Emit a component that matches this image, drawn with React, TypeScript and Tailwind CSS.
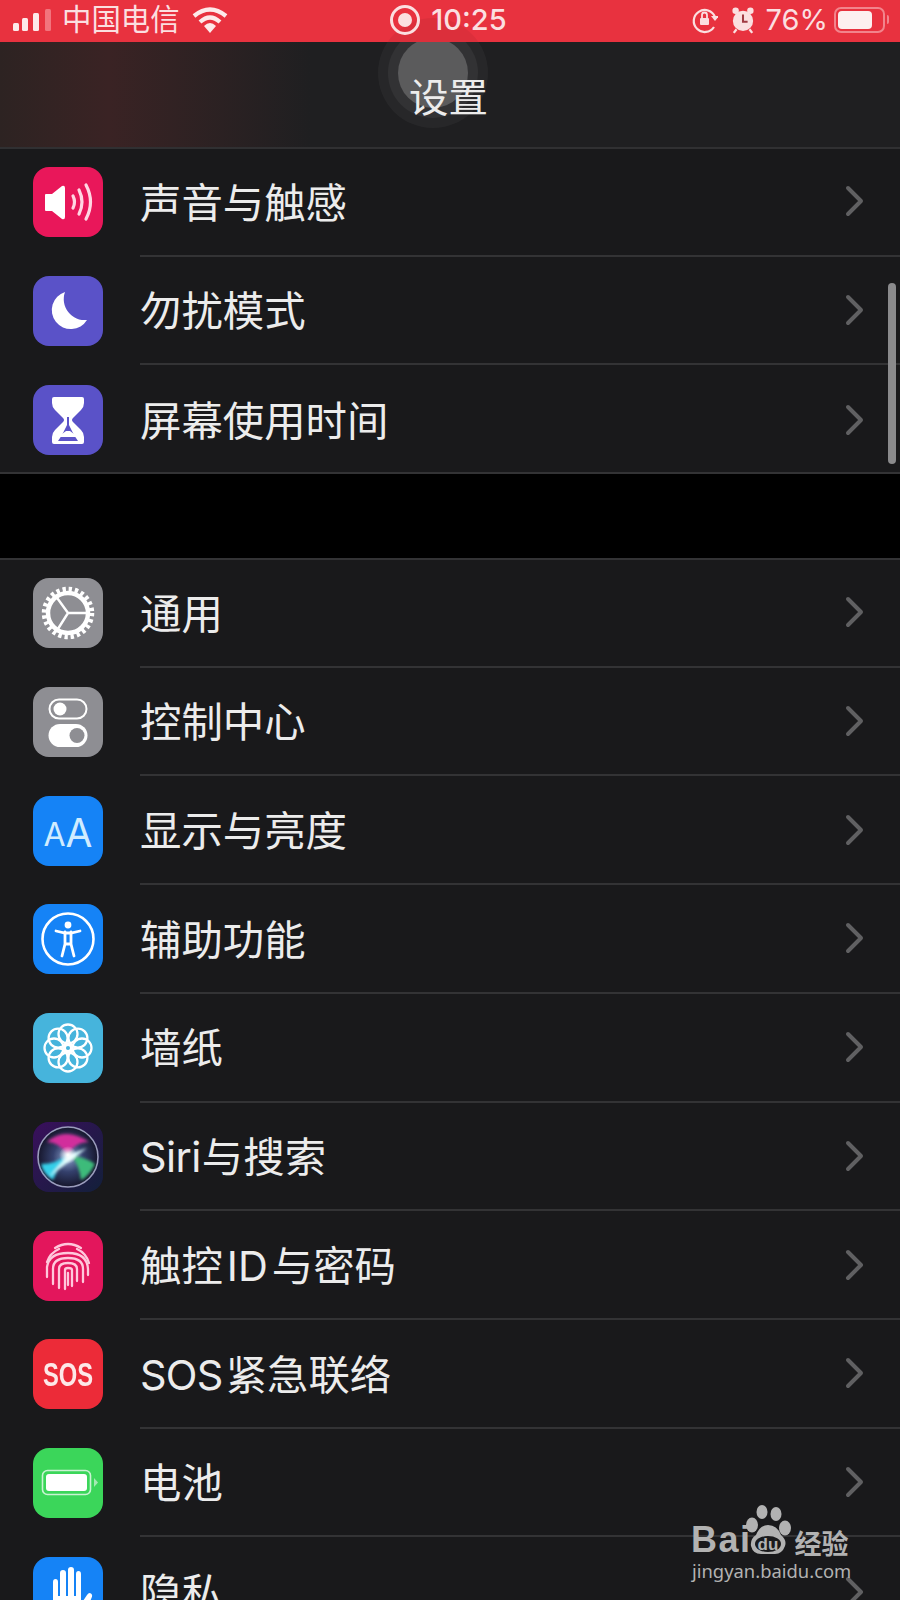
import type { ReactNode } from 'react'

const cjk = '[font-family:Inter,"Noto_Sans_CJK_SC",sans-serif]'

function Volume() {
  return (
    <svg viewBox="0 0 70 70" className="w-full h-full">
      <path d="M13 27h6l10-8q3-1 3 2v29q0 3-3 2l-10-8h-6q-1 0-1-1V28q0-1 1-1z" fill="#fff" />
      <g fill="none" stroke="#ffd6e3" strokeWidth="3.2" strokeLinecap="round">
        <path d="M40 29q3 6 0 12" />
        <path d="M46 23q6 12 0 24" />
        <path d="M53 18q9 17 0 34" />
      </g>
    </svg>
  )
}

function Moon() {
  return (
    <svg viewBox="0 0 70 70" className="w-full h-full">
      <path d="M32 16a21 21 0 0 0 22 28A19 19 0 1 1 32 16z" fill="#fff" />
    </svg>
  )
}

function Hourglass() {
  return (
    <svg viewBox="0 0 70 70" className="w-full h-full">
      <path d="M21 12h28q2 0 2 2v4q0 4-3 7l-8 8q-2 2 0 4l8 8q3 3 3 7v5q0 2-2 2H21q-2 0-2-2v-5q0-4 3-7l8-8q2-2 0-4l-8-8q-3-3-3-7v-4q0-2 2-2z" fill="#fff" />
      <path d="M29 26h12l-5 6v8l5 10 4 6H25l4-6 5-10v-8z" fill="#5c53c8" />
      <path d="M27 26h16l-6 6h-4zM25 52l8-6h4l8 6z" fill="#fff" />
    </svg>
  )
}

function Gear() {
  return (
    <svg viewBox="0 0 70 70" className="w-full h-full">
      <circle cx="35" cy="35" r="23.5" fill="none" stroke="#fff" strokeWidth="5.5" strokeDasharray="3.3 2.85" />
      <circle cx="35" cy="35" r="20" fill="none" stroke="#fff" strokeWidth="4.5" />
      <path d="M35 35L22 17M35 35h20M35 35L23 54" stroke="#fff" strokeWidth="2.4" />
    </svg>
  )
}

function Toggles() {
  return (
    <svg viewBox="0 0 70 70" className="w-full h-full">
      <rect x="16.5" y="12.5" width="37" height="19" rx="9.5" fill="none" stroke="#fff" strokeWidth="2" />
      <circle cx="27" cy="22" r="6.5" fill="#fff" />
      <rect x="15.5" y="37" width="39" height="23" rx="11.5" fill="#fff" />
      <circle cx="44" cy="48.5" r="7.5" fill="#8e8e93" />
    </svg>
  )
}

function Person() {
  return (
    <svg viewBox="0 0 70 70" className="w-full h-full">
      <circle cx="35" cy="35" r="25.5" fill="none" stroke="#fff" strokeWidth="2.6" />
      <circle cx="35" cy="21" r="3.4" fill="#fff" />
      <path d="M23 27l9 2h6l9-2" fill="none" stroke="#fff" strokeWidth="2.8" strokeLinecap="round" />
      <path d="M32 28v12l-3 12M38 28v12l3 12M32 40h6" fill="none" stroke="#fff" strokeWidth="2.8" strokeLinecap="round" />
    </svg>
  )
}

function Flower() {
  const petals = [0, 45, 90, 135, 180, 225, 270, 315]
  return (
    <svg viewBox="0 0 70 70" className="w-full h-full">
      <g fill="none" stroke="#fff" strokeWidth="2.3">
        {petals.map((a) => (
          <circle key={a} cx="35" cy="21" r="9.5" transform={`rotate(${a} 35 35)`} />
        ))}
        <circle cx="35" cy="35" r="3.2" />
      </g>
    </svg>
  )
}

function Siri() {
  return (
    <svg viewBox="0 0 70 70" className="w-full h-full">
      <defs>
        <linearGradient id="siribg" x1="0" y1="0" x2="1" y2="1">
          <stop offset="0" stopColor="#3a0f5c" />
          <stop offset="1" stopColor="#12203a" />
        </linearGradient>
        <radialGradient id="siriglow" cx="50%" cy="50%" r="50%">
          <stop offset="0" stopColor="#8fa6d0" />
          <stop offset="0.5" stopColor="#34406c" />
          <stop offset="1" stopColor="#16162c" />
        </radialGradient>
        <radialGradient id="siricore" cx="50%" cy="50%" r="50%">
          <stop offset="0" stopColor="#fff" />
          <stop offset="1" stopColor="#fff" stopOpacity="0" />
        </radialGradient>
        <filter id="siriblur">
          <feGaussianBlur stdDeviation="1.6" />
        </filter>
      </defs>
      <rect width="70" height="70" fill="url(#siribg)" />
      <circle cx="35" cy="35" r="30" fill="url(#siriglow)" stroke="#9a9cbc" strokeWidth="1.6" />
      <g filter="url(#siriblur)">
        <path d="M14 20Q32 4 56 20Q42 20 35 33Q26 20 14 20z" fill="#d22e9c" />
        <path d="M8 42Q24 42 35 32Q24 48 20 58Q10 52 8 42z" fill="#35d0ea" />
        <path d="M38 34Q50 34 62 42Q56 54 48 58Q46 42 38 34z" fill="#3ebb7a" />
        <path d="M16 55L35 33L54 26L38 38z" fill="#dff" />
      </g>
      <circle cx="35" cy="33" r="9" fill="url(#siricore)" />
    </svg>
  )
}

function Print() {
  return (
    <svg viewBox="0 0 70 70" className="w-full h-full">
      <g fill="none" stroke="#ffc8dc" strokeWidth="2.3" strokeLinecap="round">
        <path d="M22 17Q35 9 48 17" />
        <path d="M14 31Q17 22 26 18" />
        <path d="M44 18Q53 22 56 32" />
        <path d="M14 46V36Q16 22 35 22Q54 22 55 38V44" />
        <path d="M20 53V38Q20 27 35 27Q50 27 50 38V51" />
        <path d="M26 57V38Q26 32 35 32Q44 32 44 38V50" />
        <path d="M32 58V39Q32 37 35 37Q39 37 39 39V55" />
        <path d="M35 42V54" />
      </g>
    </svg>
  )
}

function Battery() {
  return (
    <svg viewBox="0 0 70 70" className="w-full h-full">
      <rect x="9.500" y="22.500" width="48" height="24" rx="5" fill="none" stroke="#c9f3d2" strokeWidth="1.6" />
      <rect x="13" y="26" width="41" height="17" rx="3" fill="#fff" />
      <path d="M61 30l4 4.500-4 4.500z" fill="#a5e9b3" />
    </svg>
  )
}

function Hand() {
  return (
    <svg viewBox="0 0 70 70" className="w-full h-full">
      <path d="M20 25q0-3 2.500-3t2.500 3v14h2V16q0-3 3-3t3 3v23h2V13q0-3 3-3t3 3v26h2V17q0-3 2.500-3t2.500 3v30l6-9q2-3 4-1.500t.5 4.500L50 61q-4 8-13 8h-4q-13 0-13-14z" fill="#fff" />
    </svg>
  )
}

function AaIcon() {
  return (
    <div className="w-full h-full flex items-end justify-center pb-[15px] text-[#d0ecff] font-['Inter'] leading-none">
      <span className="text-[32px]">A</span>
      <span className="text-[39px] -mb-[1px]">A</span>
    </div>
  )
}

function SosIcon() {
  return (
    <div className="w-full h-full flex items-center justify-center text-[#fde8e8] font-['Liberation_Sans'] font-bold text-[33px] scale-x-[0.72] leading-none whitespace-nowrap">
      SOS
    </div>
  )
}

type Item = { id: string; label: ReactNode; icon: ReactNode; bg: string }

const topRows: Item[] = [
  { id: 'sound', label: '声音与触感', icon: <Volume />, bg: 'bg-[#e9175a]' },
  { id: 'dnd', label: '勿扰模式', icon: <Moon />, bg: 'bg-[#5a52c8]' },
  { id: 'screen', label: '屏幕使用时间', icon: <Hourglass />, bg: 'bg-[#5a52c8]' },
]

const mainRows: Item[] = [
  { id: 'general', label: '通用', icon: <Gear />, bg: 'bg-[#8e8e93]' },
  { id: 'control', label: '控制中心', icon: <Toggles />, bg: 'bg-[#8e8e93]' },
  { id: 'display', label: '显示与亮度', icon: <AaIcon />, bg: 'bg-[#1583f6]' },
  { id: 'access', label: '辅助功能', icon: <Person />, bg: 'bg-[#1583f6]' },
  { id: 'wall', label: '墙纸', icon: <Flower />, bg: 'bg-[#46b4dc]' },
  { id: 'siri', label: <><span className="tracking-[-0.5px]">Siri</span><span className="ml-[1px]">与搜索</span></>, icon: <Siri />, bg: 'bg-[#1a1430]' },
  { id: 'touch', label: <>触控<span className="mx-[4px]">ID</span>与密码</>, icon: <Print />, bg: 'bg-[#e3165c]' },
  { id: 'sos', label: <><span className="tracking-[-0.7px]">SOS</span><span className="ml-[3px]">紧急联络</span></>, icon: <SosIcon />, bg: 'bg-[#ec2b38]' },
  { id: 'battery', label: '电池', icon: <Battery />, bg: 'bg-[#3bd65a]' },
  { id: 'privacy', label: '隐私', icon: <Hand />, bg: 'bg-[#1583f6]' },
]

function Chevron() {
  return (
    <svg viewBox="0 0 20 32" className="w-[20px] h-[32px] shrink-0">
      <path d="M4 3l13 13L4 29" fill="none" stroke="#606062" strokeWidth="4" strokeLinecap="round" strokeLinejoin="round" />
    </svg>
  )
}

function Row({ item, last }: { item: Item; last?: boolean }) {
  return (
    <div className="h-[108.7px] flex items-stretch pl-[33px]">
      <div className={`shrink-0 self-center w-[70px] h-[70px] rounded-[16px] overflow-hidden ${item.bg}`}>{item.icon}</div>
      <div className={`flex-1 ml-[37px] flex items-center pr-[36px] ${last ? '' : 'border-b-2 border-[#333335]'}`}>
        <span className="flex-1 mt-[4px] text-[41.4px] leading-none text-[#ececec]">{item.label}</span>
        <Chevron />
      </div>
    </div>
  )
}

function Signal() {
  return (
    <svg viewBox="0 0 40 22" className="w-[40px] h-[22px]">
      <rect x="0" y="14" width="6" height="8" rx="1.500" fill="#fdeaea" />
      <rect x="9" y="9" width="6" height="13" rx="1.500" fill="#fdeaea" />
      <rect x="20" y="4" width="6" height="18" rx="1.500" fill="#fdeaea" />
      <rect x="32" y="0" width="6" height="22" rx="1.500" fill="#f2747d" />
    </svg>
  )
}

function Wifi() {
  return (
    <svg viewBox="0 0 36 28" className="w-[36px] h-[28px]">
      <g fill="none" stroke="#fdeaea" strokeWidth="4.200">
        <path d="M2 10Q18-3 34 10" />
        <path d="M8 16Q18 7 28 16" />
      </g>
      <path d="M12 20Q18 14 24 20l-6 7z" fill="#fdeaea" />
    </svg>
  )
}

function StatusBar() {
  return (
    <div className="relative z-20 h-[42px] bg-[#e8323f] overflow-hidden flex items-center justify-between text-[#fbdfe0] text-[29px] leading-none pl-[13px] pr-[11px] pb-[3px]">
      <div className="absolute left-[378px] top-[18px] w-[110px] h-[110px] rounded-full bg-black/[0.05]" />
      <div className="relative w-[260px] flex items-center gap-[8px]">
        <Signal />
        <span className="ml-[1px] mr-[4px] text-[29.4px]">中国电信</span>
        <Wifi />
      </div>
      <div className="relative flex items-center gap-[11px] pr-[5px]">
        <span className="w-[30px] h-[30px] rounded-full border-[3px] border-[#fbdfe0] flex items-center justify-center">
          <span className="w-[14px] h-[14px] rounded-full bg-[#fbdfe0]" />
        </span>
        <span className="font-medium">10:25</span>
      </div>
      <div className="relative w-[260px] flex items-center justify-end">
        <svg viewBox="0 0 26 28" className="w-[26px] h-[28px] mr-[13px]">
          <path d="M22 21A11 11 0 1 1 23 11" fill="none" stroke="#fbdfe0" strokeWidth="2.200" />
          <path d="M19 10h8l-4 5z" fill="#fbdfe0" />
          <rect x="8" y="12" width="9" height="7" rx="1" fill="#fbdfe0" />
          <path d="M10 12V9a2.500 2.500 0 0 1 5 0v3" fill="none" stroke="#fbdfe0" strokeWidth="1.800" />
        </svg>
        <svg viewBox="0 0 26 30" className="w-[24px] h-[28px] mr-[11px]">
          <circle cx="13" cy="16" r="11" fill="#fbdfe0" />
          <circle cx="5" cy="5" r="3.500" fill="#fbdfe0" />
          <circle cx="21" cy="5" r="3.500" fill="#fbdfe0" />
          <path d="M13 9v8h5" fill="none" stroke="#a03a42" strokeWidth="2.200" />
          <path d="M6 25l-3 4M20 25l3 4" stroke="#fbdfe0" strokeWidth="2.500" />
        </svg>
        <span className="mr-[6px]">76%</span>
        <div className="flex items-center">
          <div className="w-[51px] h-[26px] rounded-[7px] border-2 border-[#f2848c] p-[2px]">
            <div className="w-[34px] h-full rounded-[4px] bg-[#fdf0f0]" />
          </div>
          <div className="w-[2px] h-[9px] ml-[2px] rounded-r bg-[#f2848c]" />
        </div>
      </div>
    </div>
  )
}

function AssistiveTouch() {
  return (
    <div className="absolute left-[378px] -top-[24px] w-[110px] h-[110px] rounded-full bg-white/[0.04] flex items-center justify-center">
      <div className="w-[90px] h-[90px] rounded-full bg-white/[0.05] flex items-center justify-center">
        <div className="w-[70px] h-[70px] rounded-full bg-white/[0.2]" />
      </div>
    </div>
  )
}

function NavBar() {
  return (
    <div className="relative z-10 h-[107px] bg-[#1f1f21] border-b-2 border-[#303032] flex items-center justify-center overflow-hidden pr-[3px]">
      <div className="absolute left-0 inset-y-0 w-[310px] bg-gradient-to-r from-[#2d2322] via-[#3a2324] via-35% to-[#1f1f21]" />
      <AssistiveTouch />
      <span className="relative text-[39.5px] leading-none text-[#ececec] mt-[9px]">设置</span>
    </div>
  )
}

function Watermark() {
  return (
    <div className="absolute z-30 left-[691px] top-[1505px] w-[165px] text-[#b2b2b2]">
      <div className="flex items-end h-[50px] font-['Liberation_Sans'] font-bold leading-none">
        <span className="text-[36px] mb-[-3px] tracking-[1.5px]">Bai</span>
        <svg viewBox="0 0 47 50" className="w-[47px] h-[50px] shrink-0 -ml-[7px]">
          <ellipse cx="17" cy="7" rx="5.500" ry="7" fill="#b2b2b2" />
          <ellipse cx="31" cy="9" rx="5.500" ry="7" fill="#b2b2b2" />
          <ellipse cx="7" cy="20" rx="6" ry="7.500" fill="#b2b2b2" />
          <ellipse cx="40" cy="23" rx="6" ry="7.500" fill="#b2b2b2" />
          <path d="M23 20q9 0 13 10 6 5 4 11-3 8-10 8H16q-8 0-10-8-1-7 5-11 4-10 12-10z" fill="#b2b2b2" />
          <ellipse cx="23" cy="39" rx="13" ry="8" fill="#1a1a1c" />
          <text x="23" y="45" textAnchor="middle" fontSize="17" fontFamily="Liberation Sans" fontWeight="700" fill="#b2b2b2">du</text>
        </svg>
        <span className="text-[27px] ml-[3px] -mb-[1px] font-['Noto_Sans_CJK_SC'] font-bold">经验</span>
      </div>
      <div className="text-[18.4px] leading-none mt-[7px] ml-[1px] font-['Noto_Sans'] whitespace-nowrap">jingyan.baidu.com</div>
    </div>
  )
}

export default function App() {
  return (
    <div className={`relative w-[900px] h-[1600px] overflow-hidden bg-black ${cjk}`}>
      <StatusBar />
      <NavBar />
      <div className="-mt-[1px] bg-[#19191b] border-b-2 border-[#333335]">
        <div className="-mb-[2px]">
          {topRows.map((r, i) => (
            <Row key={r.id} item={r} last={i === topRows.length - 1} />
          ))}
        </div>
      </div>
      <div className="mt-[84px] bg-[#19191b] border-t-2 border-[#333335]">
        <div className="-mt-[1px]">
          {mainRows.map((r, i) => (
            <Row key={r.id} item={r} last={i === mainRows.length - 1} />
          ))}
        </div>
      </div>
      <div className="absolute z-30 left-[888px] top-[283px] w-[8px] h-[181px] rounded-full bg-[#8a8a8c]" />
      <Watermark />
    </div>
  )
}
